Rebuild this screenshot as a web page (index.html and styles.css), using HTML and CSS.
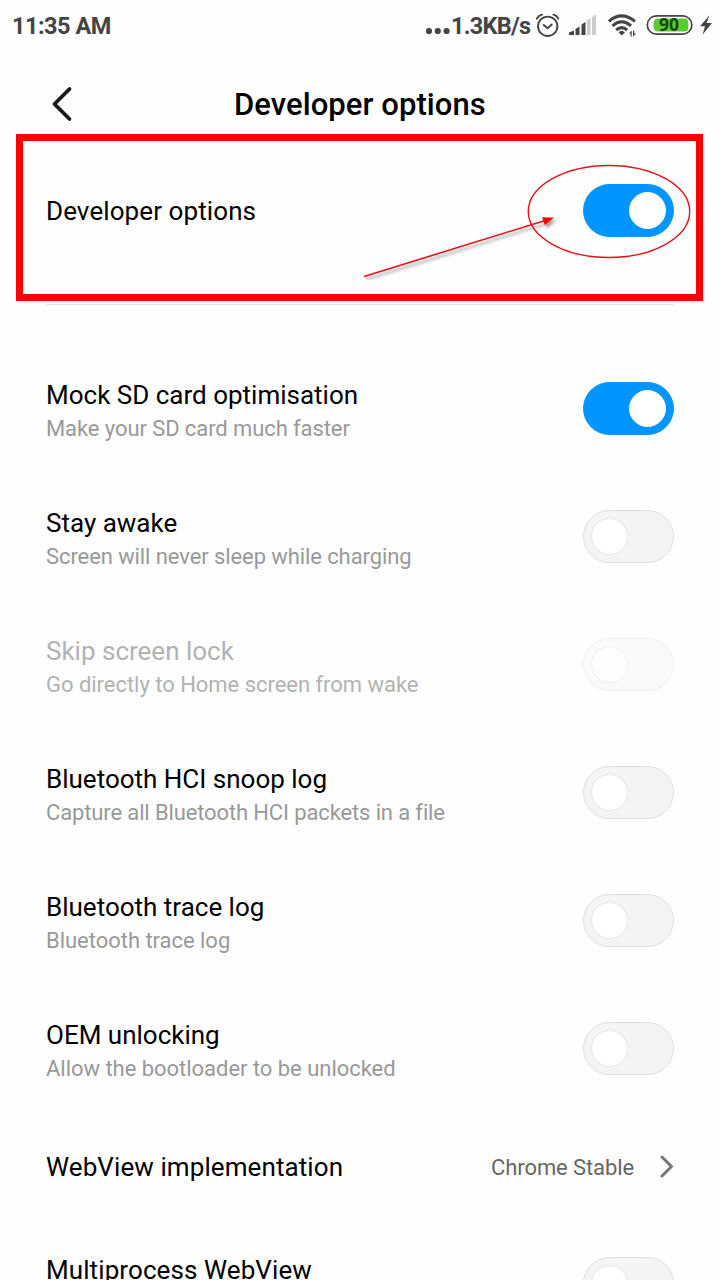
FILE: index.html
```html
<!DOCTYPE html>
<html lang="en">
<head>
<meta charset="utf-8">
<title>Developer options</title>
<link rel="stylesheet" href="styles.css">
</head>
<body>
<div class="screen">
  <header class="status">
    <span class="time">11:35 AM</span>
    <span class="speed"><svg class="dots" width="26" height="8" viewBox="0 0 26 8"><circle cx="4" cy="4" r="3.1"/><circle cx="12.8" cy="4" r="3.1"/><circle cx="21.6" cy="4" r="3.1"/></svg><span class="rate">1.3KB/s</span></span>
    <svg class="status-icons" width="184" height="30" viewBox="536 10 184 30">
      <g fill="none" stroke="#444" stroke-width="1.9" stroke-linecap="round">
        <circle cx="547.7" cy="26.3" r="9.7"/>
        <path d="M543.7 25 547.7 28.3 551.7 24.5M536.8 18.7Q538.5 15.5 542 14.6M553.5 14.6Q557 15.5 558.2 18.7"/>
      </g>
      <path fill="#444" d="M569 35V32.5L574 30.5V35ZM575.5 35V29L579.5 26.5V35ZM581.5 35V24.5L585.5 22V35Z"/>
      <path fill="#ccc" d="M587 35V20.5L590.5 18V35ZM592 35V17L596 14.5V35Z"/>
      <g fill="none" stroke="#444" stroke-width="3">
        <path d="M608.8 21.3Q621.5 10.5 635 21.3"/>
        <path d="M612.5 25.8Q621.7 17.8 631 25.8"/>
        <path d="M616.2 30Q621.7 25.2 627.2 30"/>
      </g>
      <path fill="#444" d="M618.5 32.2Q621.7 30 625 32.2L621.7 35.5ZM629 33.5 631.7 30.5V36.5H630.5V33.5ZM633 30.5H634.2V33.5H636L633 36.8Z"/>
      <rect x="647.3" y="15.8" width="44.5" height="18.4" rx="9.2" fill="#fff" stroke="#444" stroke-width="1.7"/>
      <path d="M657 18.5H685.5Q688.5 18.5 688.5 25T685.5 31.5H657Q653.5 31.5 653.5 25T657 18.5Z" fill="#5bcb2d"/>
      <text class="battery-level" x="669" y="31.3" text-anchor="middle">90</text>
      <path fill="#444" d="M709.5 15.3 700 26.3H705L702.5 34.7 712 23H706.5Z"/>
    </svg>
  </header>

  <div class="titlebar">
    <svg class="back" width="22" height="36" viewBox="0 0 22 36"><path d="M18.5 3 3.5 18 18.5 33" fill="none" stroke="#1b1b1b" stroke-width="3.8" stroke-linecap="round" stroke-linejoin="round"/></svg>
    <h1>Developer options</h1>
  </div>

  <section class="highlight">
    <div class="name wide">Developer options</div>
    <div class="switch on"></div>
    <svg class="annotation" width="340" height="130" viewBox="360 150 340 130">
      <defs>
        <filter id="soft" x="-10%" y="-20%" width="120%" height="150%"><feDropShadow dx="2" dy="3" stdDeviation="1.8" flood-color="#000" flood-opacity=".4"/></filter>
      </defs>
      <ellipse cx="609" cy="211.5" rx="80.7" ry="46" fill="none" stroke="#e3131b" stroke-width="1.4"/>
      <g filter="url(#soft)"><path d="M364 276.5 545 220.5" stroke="#e8101a" stroke-width="1.6"/><path d="M554 217.8 542.2 217.2 544.8 225Z" fill="#f00"/></g>
    </svg>
  </section>
  <div class="divider"></div>

  <main class="options">
    <div class="row"><div class="label"><div class="name">Mock SD card optimisation</div><div class="note">Make your SD card much faster</div></div><div class="switch on"></div></div>
    <div class="row"><div class="label"><div class="name">Stay awake</div><div class="note">Screen will never sleep while charging</div></div><div class="switch"></div></div>
    <div class="row disabled"><div class="label"><div class="name">Skip screen lock</div><div class="note loose">Go directly to Home screen from wake</div></div><div class="switch"></div></div>
    <div class="row"><div class="label"><div class="name">Bluetooth HCI snoop log</div><div class="note tight">Capture all Bluetooth HCI packets in a file</div></div><div class="switch"></div></div>
    <div class="row"><div class="label"><div class="name">Bluetooth trace log</div><div class="note loose">Bluetooth trace log</div></div><div class="switch"></div></div>
    <div class="row"><div class="label"><div class="name">OEM unlocking</div><div class="note loose">Allow the bootloader to be unlocked</div></div><div class="switch"></div></div>
    <div class="row link"><div class="name wide">WebView implementation</div><div class="value"><span class="choice">Chrome Stable</span><svg width="16" height="24" viewBox="0 0 16 24"><path d="M4 2 13.5 11.5 4 21" fill="none" stroke="#777" stroke-width="3" stroke-linecap="round" stroke-linejoin="round"/></svg></div></div>
    <div class="row"><div class="label single"><div class="name wide">Multiprocess WebView</div></div><div class="switch"></div></div>
  </main>
</div>
</body>
</html>
```
FILE: styles.css
```css
*, *::after { box-sizing: border-box; }

html, body {
  margin: 0;
  height: 1280px;
  overflow: hidden;
  background: #fff;
}

.screen {
  width: 720px;
  height: 1280px;
  overflow: hidden;
  background: #fefefe;
  font-family: Roboto, "Liberation Sans", sans-serif;
  color: #000;
}

.status {
  display: flex;
  height: 50px;
  padding: 10px 0 0 12px;
  color: #444;
  font-size: 23.5px;
  font-weight: 700;
  line-height: 33px;
  letter-spacing: -.5px;
}

.time { flex: 1; }
.speed { display: flex; }
.dots { margin: 17px 0 0; fill: #444; }
.rate { width: 85px; letter-spacing: -.75px; white-space: nowrap; }
.status-icons { display: block; letter-spacing: 0; }

.battery-level {
  font: 700 17.5px "Open Sans", sans-serif;
  fill: #17470a;
}

.titlebar {
  display: flex;
  align-items: center;
  height: 84px;
  padding: 24px 0 0 51px;
}

h1 {
  margin: 1px 0 0 161px;
  font-size: 31px;
  font-weight: 500;
  line-height: 36px;
  letter-spacing: .07px;
  white-space: nowrap;
}

.highlight {
  position: relative;
  display: flex;
  justify-content: space-between;
  align-items: flex-start;
  width: 687px;
  height: 167px;
  margin-left: 16px;
  padding: 43px 22px 0 23px;
  border: 7px solid #f00;
}

.highlight .name { margin-top: 10px; }

.annotation {
  position: absolute;
  left: 337px;
  top: 9px;
}

.divider {
  height: 1px;
  margin: 3px 46px 39px;
  background: #e2e2e2;
}

.row {
  display: flex;
  align-items: center;
  justify-content: space-between;
  height: 128px;
  padding: 0 46px;
}

.label { padding-top: 7px; }
.label.single { padding: 0 0 26px; }

.name {
  font-size: 26px;
  line-height: 34px;
  white-space: nowrap;
}

.name.wide { letter-spacing: .09px; }

.note {
  color: #999;
  font-size: 22px;
  line-height: 33px;
  letter-spacing: -.09px;
  white-space: nowrap;
}

.note.loose { letter-spacing: -.03px; }
.note.tight { letter-spacing: -.13px; }

.switch {
  display: flex;
  align-items: center;
  flex: none;
  width: 91px;
  height: 53px;
  padding: 0 7px;
  border: 1px solid #dedede;
  border-radius: 27px;
  background: #f4f4f4;
}

.switch::after {
  content: "";
  width: 37px;
  height: 37px;
  border: 1px solid #e6e6e6;
  border-radius: 50%;
  background: #fff;
}

.switch.on {
  justify-content: flex-end;
  border-color: #0095ff;
  background: #0095ff;
}

.switch.on::after { border-color: #fff; }

.disabled .name, .disabled .note { color: #b2b2b2; }
.disabled .switch { border-color: #f0f0f0; background: #fafafa; }
.disabled .switch::after { border-color: #f2f2f2; background: #fdfdfd; }

.link { height: 107px; padding-top: 2px; }

.value {
  display: flex;
  align-items: center;
  gap: 24px;
  color: #666;
  font-size: 22px;
  letter-spacing: -.1px;
}

.choice { padding-top: 2px; }
```
